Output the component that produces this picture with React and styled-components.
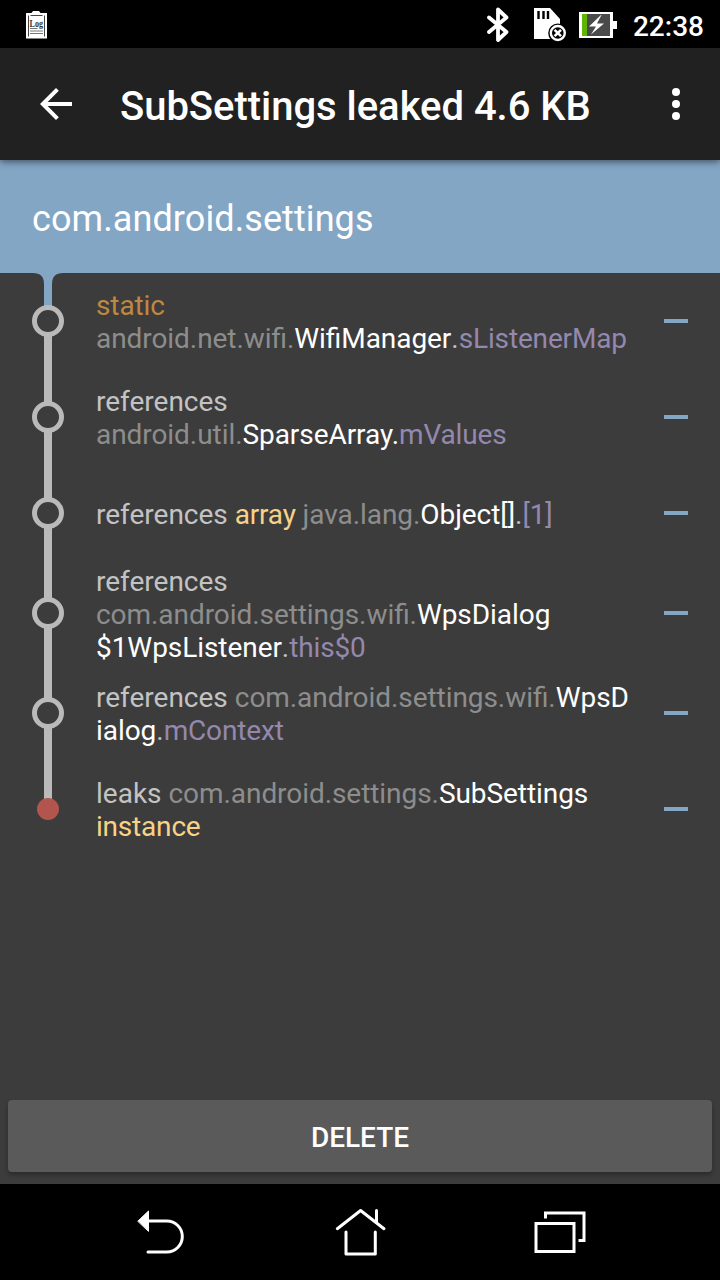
import React from "react";
import styled, { createGlobalStyle } from "styled-components";

const GlobalStyle = createGlobalStyle`
  *, *::before, *::after { box-sizing: border-box; }
  body {
    margin: 0;
    background: #3c3c3c;
    font-family: Roboto, "Noto Sans", sans-serif;
    -webkit-font-smoothing: antialiased;
  }
  button { border: 0; padding: 0; background: none; font: inherit; color: inherit; }
`;

const palette = {
  plain: "#c3c3c3",
  pkg: "#8d8d8d",
  cls: "#ffffff",
  field: "#9488ae",
  stat: "#be8843",
  kind: "#f8d286",
  blue: "#84a6c5",
  gray: "#bababa",
  red: "#b1554e",
  surface: "#3c3c3c",
};

const tracking = {
  pkg: "-0.06px",
  cls: "-0.06px",
  field: "-0.15px",
  stat: "-0.1px",
  kind: "-0.2px",
};

const Screen = styled.div`
  display: flex;
  flex-direction: column;
  width: 720px;
  height: 1280px;
  overflow: hidden;
  background: ${palette.surface};
`;

const StatusBar = styled.header`
  display: flex;
  align-items: center;
  flex: none;
  height: 48px;
  padding: 0 16px 0 24px;
  background: #000;
  color: #fff;
`;

const StatusIcons = styled.div`
  display: flex;
  align-items: center;
  gap: 13px;
  margin-left: auto;
`;

const Clock = styled.time`
  font-size: 28px;
  line-height: 32px;
  font-weight: 500;
  padding-top: 5px;
  margin-left: 3px;
`;

const Icon = styled.svg`
  display: block;
  flex: none;
`;

const SpacedIcon = styled(Icon)`
  margin-right: 9px;
`;

const Toolbar = styled.div`
  display: flex;
  align-items: center;
  flex: none;
  height: 112px;
  padding: 0 28px 0 32px;
  background: #212121;
  color: #fff;
  box-shadow: 0 2px 7px rgba(0, 0, 0, 0.5);
  z-index: 1;
`;

const IconButton = styled.button`
  display: grid;
  place-items: center;
  width: 48px;
  height: 48px;
`;

const Title = styled.h1`
  flex: 1;
  margin: 0;
  padding: 6px 0 0 40px;
  font-size: 40px;
  line-height: 48px;
  font-weight: 500;
  letter-spacing: -0.03px;
  white-space: nowrap;
`;

const ProcessHeader = styled.div`
  display: flex;
  align-items: center;
  flex: none;
  height: 113px;
  padding: 5px 32px 0;
  background: ${palette.blue};
  color: #fff;
  font-size: 36px;
  line-height: 42px;
  letter-spacing: 0.09px;
`;

const Trace = styled.ul`
  flex: 1;
  margin: 0;
  padding: 0;
  list-style: none;
`;

const TraceRow = styled.li`
  display: flex;
  align-items: center;
  height: ${(p) => p.$height}px;
  padding-right: 32px;
`;

const Connector = styled.svg`
  display: block;
  flex: none;
  width: 96px;
  height: 100%;
`;

const Description = styled.p`
  flex: 1;
  margin: 0;
  padding-top: 2px;
  font-size: 28px;
  line-height: 33px;
  white-space: nowrap;
  font-feature-settings: "liga" 1;
`;

const Token = styled.span`
  color: ${(p) => palette[p.$kind]};
  letter-spacing: ${(p) => tracking[p.$kind] || "normal"};
`;

const Collapse = styled.button`
  width: 24px;
  height: 4px;
  background: ${palette.blue};
`;

const Footer = styled.div`
  flex: none;
  padding: 0 8px 12px;
`;

const DeleteButton = styled.button`
  display: block;
  width: 100%;
  height: 72px;
  padding-top: 2px;
  border-radius: 4px;
  background: #5a5a5a;
  color: #fff;
  font-size: 28px;
  font-weight: 500;
  box-shadow: 0 3px 4px rgba(0, 0, 0, 0.28);
`;

const NavBar = styled.nav`
  display: flex;
  align-items: center;
  justify-content: space-between;
  flex: none;
  height: 96px;
  padding: 0 128px;
  background: #000;
`;

const NavButton = styled.button`
  display: block;
  width: 64px;
  height: 64px;
`;

const rows = [
  {
    height: 96,
    lines: [
      [["stat", "static"]],
      [["pkg", "android.net.wifi."], ["cls", "WifiManager"], ["plain", "."], ["field", "sListenerMap"]],
    ],
  },
  {
    height: 96,
    lines: [
      [["plain", "references"]],
      [["pkg", "android.util."], ["cls", "SparseArray."], ["field", "mValues"]],
    ],
  },
  {
    height: 96,
    lines: [
      [["plain", "references "], ["kind", "array"], ["pkg", " java.lang."], ["cls", "Object[]"], ["plain", "."], ["field", "[1]"]],
    ],
  },
  {
    height: 104,
    lines: [
      [["plain", "references"]],
      [["pkg", "com.android.settings.wifi."], ["cls", "WpsDialog"]],
      [["cls", "$1WpsListener"], ["plain", "."], ["field", "this$0"]],
    ],
  },
  {
    height: 96,
    lines: [
      [["plain", "references "], ["pkg", "com.android.settings.wifi."], ["cls", "WpsD"]],
      [["cls", "ialog"], ["plain", "."], ["field", "mContext"]],
    ],
  },
  {
    height: 96,
    lines: [
      [["plain", "leaks "], ["pkg", "com.android.settings."], ["cls", "SubSettings"]],
      [["kind", "instance"]],
    ],
  },
];

function RowConnector({ first, last }) {
  return (
    <Connector>
      {first ? (
        <path d="M33 0Q44 0 44 11V40H52V11Q52 0 63 0Z" fill={palette.blue} />
      ) : (
        <line x1="48" x2="48" y1="0" y2="50%" stroke={palette.gray} strokeWidth="8" />
      )}
      {!last && <line x1="48" x2="48" y1="50%" y2="100%" stroke={palette.gray} strokeWidth="8" />}
      {last ? (
        <circle cx="48" cy="50%" r="11" fill={palette.red} />
      ) : (
        <circle cx="48" cy="50%" r="13.5" fill={palette.surface} stroke={palette.gray} strokeWidth="5" />
      )}
    </Connector>
  );
}

function LogIcon() {
  return (
    <Icon width="24" height="32" viewBox="0 0 24 32">
      <path d="M2 5H7.500L9 3H15L16.500 5H23V30.500H2Z" fill="#fff" />
      <path d="M6.500 7.500H18.500M4.500 7.500V28.500M20.500 7.500V28.500" stroke="#444" strokeWidth="1" fill="none" />
      <text x="5.500" y="18.500" textLength="13.500" lengthAdjust="spacingAndGlyphs" fontFamily="Liberation Serif, serif" fontSize="10.500" fontWeight="700" fill="#333">
        Log
      </text>
      <path d="M6 20.500H13.500M6 23H19M6 25.500H19" stroke="#777" strokeWidth="1" />
    </Icon>
  );
}

function BluetoothIcon() {
  return (
    <SpacedIcon width="24" height="36" viewBox="0 0 24 36" fill="none" stroke="#fff" strokeWidth="3.800" strokeLinejoin="round" strokeLinecap="round">
      <path d="M3 11.500L20.500 26L12 34V3.500L20.500 11.500L3 26" />
    </SpacedIcon>
  );
}

function SdCardIcon() {
  return (
    <Icon width="34" height="36" viewBox="0 0 34 36">
      <path d="M2 2H18L28 13V33H2Z" fill="#fff" />
      <path d="M6.500 5V13M11.500 5V13M16 5V13" stroke="#000" strokeWidth="2.400" />
      <circle cx="25.800" cy="27" r="9.600" fill="#000" />
      <circle cx="25.800" cy="27" r="7" fill="none" stroke="#fff" strokeWidth="2.400" />
      <path d="M22.600 23.800L29 30.200M29 23.800L22.600 30.200" stroke="#fff" strokeWidth="2.600" />
    </Icon>
  );
}

function BatteryIcon() {
  return (
    <Icon width="38" height="28" viewBox="0 -1 38 28">
      <path d="M0 1H34V10H38V18H34V27H0Z" fill="#fff" />
      <path d="M3 3H31V25H3Z" fill="#4a4a4a" />
      <path d="M3 3H8V25H3Z" fill="#5fb404" />
      <path d="M22 4L10 15.500H17L12 23.500L25 12.500H18L22.500 4Z" fill="#fff" />
    </Icon>
  );
}

export default function App() {
  return (
    <Screen>
      <GlobalStyle />
      <StatusBar>
        <LogIcon />
        <StatusIcons>
          <BluetoothIcon />
          <SdCardIcon />
          <BatteryIcon />
          <Clock>22:38</Clock>
        </StatusIcons>
      </StatusBar>
      <Toolbar>
        <IconButton aria-label="Back">
          <Icon width="48" height="48" viewBox="0 0 24 24" fill="#fff">
            <path d="M20 11H7.830l5.590-5.590L12 4l-8 8 8 8 1.410-1.410L7.830 13H20v-2z" />
          </Icon>
        </IconButton>
        <Title>SubSettings leaked 4.6 KB</Title>
        <Icon width="32" height="48" viewBox="0 0 32 48" fill="#fff">
          <circle cx="16" cy="12" r="4" />
          <circle cx="16" cy="24" r="4" />
          <circle cx="16" cy="36" r="4" />
        </Icon>
      </Toolbar>
      <ProcessHeader>com.android.settings</ProcessHeader>
      <Trace>
        {rows.map((row, i) => (
          <TraceRow key={i} $height={row.height}>
            <RowConnector first={i === 0} last={i === rows.length - 1} />
            <Description>
              {row.lines.map((line, j) => (
                <React.Fragment key={j}>
                  {j > 0 && <br />}
                  {line.map(([kind, text], k) => (
                    <Token key={k} $kind={kind}>{text}</Token>
                  ))}
                </React.Fragment>
              ))}
            </Description>
            <Collapse aria-label="Collapse" />
          </TraceRow>
        ))}
      </Trace>
      <Footer>
        <DeleteButton>DELETE</DeleteButton>
      </Footer>
      <NavBar>
        <NavButton aria-label="Back">
          <Icon width="64" height="64" viewBox="0 0 64 64" fill="none" stroke="#fff" strokeWidth="3" strokeLinecap="round">
            <path d="M20 21H38.800A15.500 15.500 0 0 1 38.800 52H20" />
            <path d="M10 21L20.500 11V31Z" fill="#fff" stroke="#fff" strokeWidth="1" strokeLinejoin="round" />
          </Icon>
        </NavButton>
        <NavButton aria-label="Home">
          <Icon width="64" height="64" viewBox="0 0 64 64" fill="none" stroke="#fff" strokeWidth="3" strokeLinecap="round" strokeLinejoin="round">
            <path d="M9.300 28.700L32.600 10.500L56 28.700M48.500 10.500V22M18 32V54H47.300V32" />
          </Icon>
        </NavButton>
        <NavButton aria-label="Recent apps">
          <Icon width="64" height="64" viewBox="0 0 64 64" fill="none" stroke="#fff" strokeWidth="3" strokeLinecap="square">
            <path d="M8 23.500H46V51.500H8Z M17.500 17V13H56V40.500H52" />
          </Icon>
        </NavButton>
      </NavBar>
    </Screen>
  );
}
